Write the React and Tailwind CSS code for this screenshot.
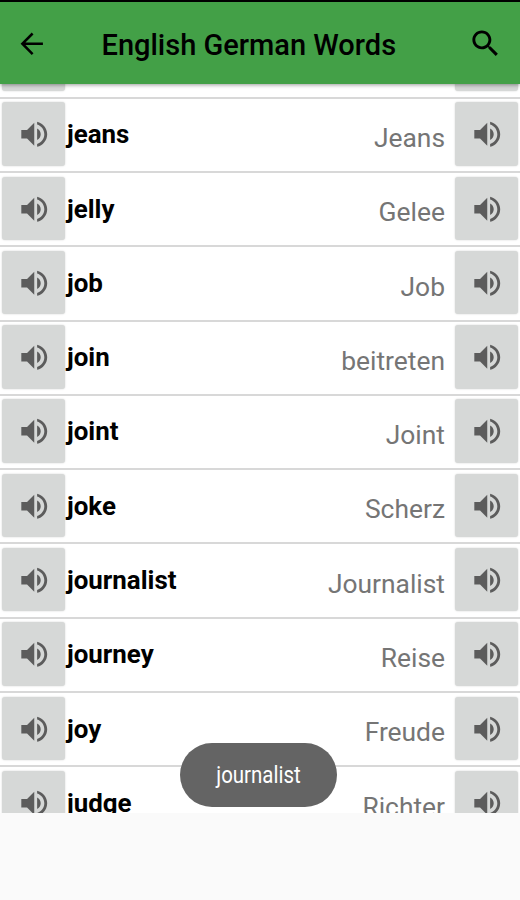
const words = [
  ['jealous', 'eifersüchtig'],
  ['jeans', 'Jeans'],
  ['jelly', 'Gelee'],
  ['job', 'Job'],
  ['join', 'beitreten'],
  ['joint', 'Joint'],
  ['joke', 'Scherz'],
  ['journalist', 'Journalist'],
  ['journey', 'Reise'],
  ['joy', 'Freude'],
  ['judge', 'Richter'],
];

function SpeakButton({ label }) {
  return (
    <button
      aria-label={label}
      className="flex h-[63.5px] w-[63px] shrink-0 items-center justify-center rounded-[3px] bg-[#d6d8d7] shadow-[0_0_2px_rgba(0,0,0,0.18)]"
    >
      <svg viewBox="0 0 24 24" className="mt-px ml-px h-[34.5px] w-[34.5px] fill-[#5c5c5c]">
        <path d="M3 9v6h4l5 5V4L7 9H3zm13.5 3c0-1.77-1.02-3.29-2.5-4.03v8.05c1.48-.73 2.5-2.25 2.5-4.02zM14 3.23v2.06c2.89.86 5 3.54 5 6.71s-2.11 5.85-5 6.71v2.06c4.01-.91 7-4.49 7-8.77s-2.99-7.86-7-8.77z" />
      </svg>
    </button>
  );
}

function WordRow({ english, german }) {
  return (
    <li className="flex h-[74.3px] shrink-0 flex-col">
      <div className="flex flex-1 items-start pt-[3.5px] pr-[2px] pl-[2px]">
        <SpeakButton label={english} />
        <span className="pt-[16px] pl-[2px] text-[25.9px] leading-[32px] font-bold text-black">{english}</span>
        <span className="flex-1 pt-[19.8px] pr-[10px] text-right text-[26.4px] leading-[32px] text-[#757575]">{german}</span>
        <SpeakButton label={german} />
      </div>
      <div className="h-[2px] bg-[#d8d8d8]" />
    </li>
  );
}

export default function App() {
  return (
    <div className="flex h-[900px] w-[520px] flex-col overflow-hidden bg-[#fafafa] font-['Roboto',sans-serif]">
      <header className="relative z-10 flex h-[84px] shrink-0 items-center border-t-2 border-black bg-[#43a047] pr-[17px] pl-[15px] shadow-[0_1px_4px_rgba(0,0,0,0.4)]">
        <svg viewBox="0 0 24 24" className="mt-px h-[33.5px] w-[33.5px] fill-black">
          <path d="M20 11.15H7.5l5.75-5.75L12 4l-8 8 8 8 1.25-1.25L7.5 12.85H20v-1.7z" />
        </svg>
        <h1 className="flex-1 pt-[4px] pl-[53px] text-[29px] leading-[40px] font-medium whitespace-nowrap text-black">English German Words</h1>
        <svg viewBox="0 0 24 24" className="h-[35px] w-[35px] fill-black">
          <path d="M15.5 14h-.79l-.28-.27C15.41 12.59 16 11.11 16 9.5 16 5.91 13.09 3 9.5 3S3 5.91 3 9.5 5.91 16 9.5 16c1.61 0 3.09-.59 4.23-1.57l.27.28v.79l5 4.99L20.49 19l-4.99-5zm-6 0C7.01 14 5 11.99 5 9.5S7.01 5 9.5 5 14 7.01 14 9.5 11.99 14 9.5 14z" />
        </svg>
      </header>
      <main className="h-[729px] shrink-0 overflow-hidden bg-white">
        <ul className="-mt-[59.6px] flex flex-col">
          {words.map(([english, german]) => (
            <WordRow key={english} english={english} german={german} />
          ))}
        </ul>
      </main>
      <div className="absolute top-[743px] left-[180px] flex h-[64px] w-[157px] items-center justify-center rounded-full bg-[#646464] text-[23.5px] text-white">
        <span className="scale-x-[0.87] pt-[2px]">journalist</span>
      </div>
    </div>
  );
}
